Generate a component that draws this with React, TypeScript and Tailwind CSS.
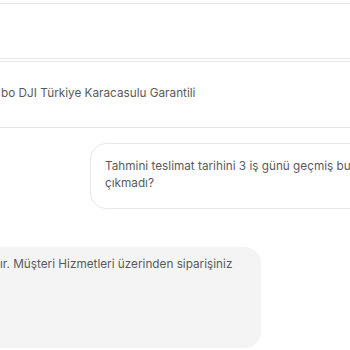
import React from "react";

export default function App() {
  return (
    <div
      className="w-[350px] h-[350px] overflow-hidden bg-white text-[#5a5a5a]"
      style={{ fontFamily: "Inter, 'Noto Sans', sans-serif" }}
    >
      {/* Top empty card */}
      <div className="mt-[3px] -mx-4 h-[56px] border border-[#e6e6e6] bg-white"></div>

      {/* Product card */}
      <div className="mt-[2px] -mx-4 h-[67px] border border-[#e6e6e6] bg-white flex items-center">
        <p className="pl-4 text-[11.75px] leading-[18px] whitespace-nowrap pb-[3px]">
          bo DJI Türkiye Karacasulu Garantili
        </p>
      </div>

      {/* User bubble */}
      <div className="mt-[15px] ml-[90px] w-[320px] h-[66px] rounded-2xl border border-[#e8e8e8] bg-white px-[14px] pt-[14px]">
        <p className="text-[11.75px] leading-[17px] whitespace-nowrap">
          Tahmini teslimat tarihini 3 iş günü geçmiş bu
          <br />
          çıkmadı?
        </p>
      </div>

      {/* Support bubble */}
      <div className="mt-[38px] -ml-4 w-[277px] h-[101px] rounded-2xl bg-[#f4f4f4] pl-4 pt-[8px]">
        <p className="text-[11.75px] leading-[18px] whitespace-nowrap">
          ır. Müşteri Hizmetleri üzerinden siparişiniz
        </p>
      </div>
    </div>
  );
}
